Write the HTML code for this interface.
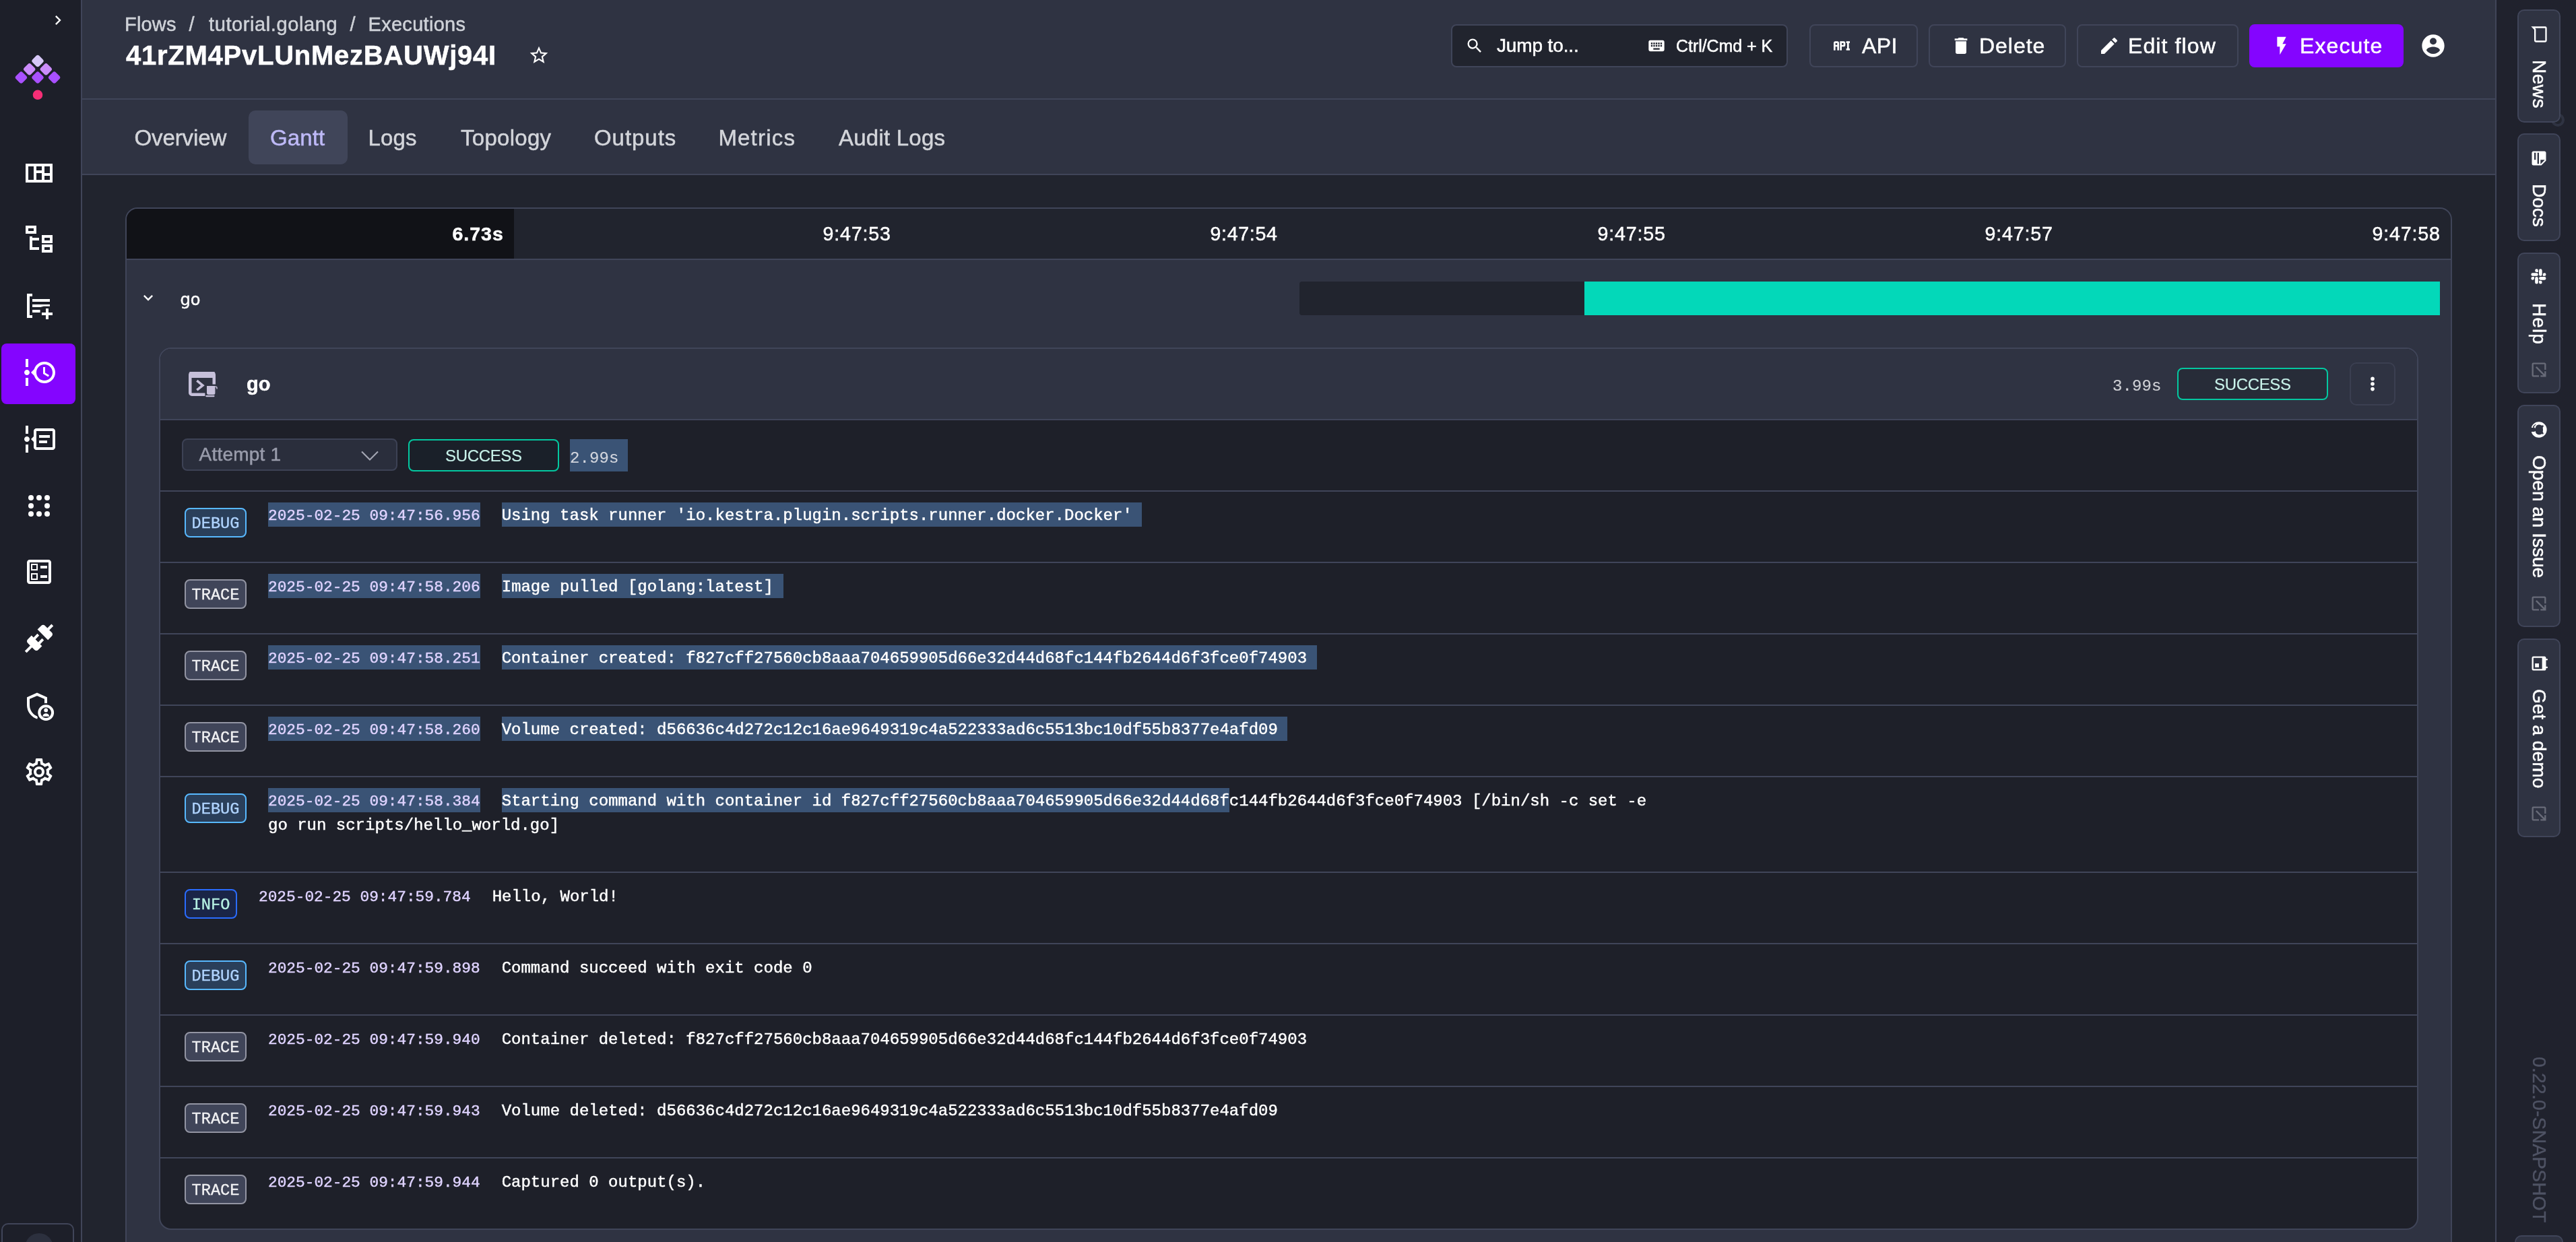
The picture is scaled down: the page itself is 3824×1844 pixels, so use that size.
<!DOCTYPE html>
<html lang="en">
<head>
<meta charset="utf-8">
<title>Executions - Gantt</title>
<style>
*{box-sizing:border-box;margin:0;padding:0}
html,body{width:3824px;height:1844px;overflow:hidden;background:#21242e}
body{position:relative;font-family:"Liberation Sans",sans-serif;color:#fff;-webkit-font-smoothing:antialiased}
#all{position:absolute;left:0;top:0;width:3824px;height:1844px;overflow:hidden;will-change:transform}
.abs{position:absolute}
svg{display:block}
.t{position:absolute;white-space:nowrap;line-height:1;-webkit-text-stroke:0.5px currentColor}
/* left sidebar */
#side{position:absolute;left:0;top:0;width:122px;height:1844px;background:#1d1f29;border-right:2px solid #404559}
#side .ic{position:absolute;left:34px;width:48px;height:48px;fill:#fff}
#side .act{position:absolute;left:2px;top:510px;width:110px;height:90px;border-radius:8px;background:#8405ff}
/* header */
#head{position:absolute;left:122px;top:0;width:3582px;height:148px;background:#2f3342;border-bottom:2px solid #404559}
#tabs{position:absolute;left:122px;top:148px;width:3582px;height:112px;background:#2f3342;border-bottom:2px solid #404559}
#rside{position:absolute;left:3704px;top:0;width:120px;height:1844px;background:#20222d;border-left:2px solid #404559}
.btn{position:absolute;top:36px;height:64px;border:2px solid #404559;border-radius:8px;background:#2f3342}
.tab{position:absolute;top:0;font-size:32px;color:#d2d4d9;line-height:1;white-space:nowrap}
/* gantt card */
#card{position:absolute;left:186px;top:308px;width:3454px;height:1600px;background:#2f3342;border:2px solid #404559;border-radius:18px;overflow:hidden}
#inner{position:absolute;left:236px;top:516px;width:3354px;height:1310px;background:#1e2029;border:2px solid #404559;border-radius:18px;overflow:hidden}
.row{position:absolute;left:0;width:3350px;border-top:2px solid #404559}
.bd{position:absolute;left:36px;top:24px;height:44px;border-radius:8px;border:2px solid;font-family:"Liberation Mono",monospace;font-size:23.6px;line-height:43px;text-align:center;-webkit-text-stroke:0.35px currentColor;overflow:hidden}
.bd.debug{width:92px;border-color:#58b9ff;background:#2a3f5a;color:#b0d4ff}
.bd.trace{width:92px;border-color:#9395a3;background:#404559;color:#f2f2f4}
.bd.info{width:78px;border-color:#2a6cff;background:#1a2547;color:#b6f1e3}
.lg{position:absolute;top:18px;-webkit-text-stroke:0.45px currentColor;font-family:"Liberation Mono",monospace;font-size:24px;line-height:36px;white-space:pre;color:#fff}
.lg .ts{font-size:22.8px;color:#dfd3ff;margin-right:32px}
.sel{position:absolute;background:#3a5375}
.rt{position:absolute;left:33px;width:64px;border:2px solid #404559;border-radius:10px;background:#2f3342}
.rt .lbl{position:absolute;left:0;width:60px;writing-mode:vertical-rl;font-size:28px;line-height:60px;color:#fff;white-space:nowrap;-webkit-text-stroke:0.5px currentColor}
.rt svg{position:absolute;fill:#fff}
</style>
</head>
<body>
<div id="all">
<div id="side">
  <svg class="abs" style="left:72px;top:16px;width:28px;height:28px;fill:#fff" viewBox="0 0 24 24"><path d="M8.59,16.58L13.17,12L8.59,7.41L10,6L16,12L10,18L8.59,16.58Z"/></svg>
  <!-- logo -->
  <svg class="abs" style="left:16px;top:74px;width:80px;height:80px" viewBox="0 0 80 80">
    <g transform="translate(40,16.5) rotate(45)"><rect x="-7" y="-7" width="14" height="14" rx="3.2" fill="#d6c7f7"/></g>
    <g transform="translate(27.7,28.8) rotate(45)"><rect x="-7" y="-7" width="14" height="14" rx="3.2" fill="#cb8cfb"/></g>
    <g transform="translate(52.3,28.8) rotate(45)"><rect x="-7" y="-7" width="14" height="14" rx="3.2" fill="#cb8cfb"/></g>
    <g transform="translate(15.4,41.1) rotate(45)"><rect x="-7" y="-7" width="14" height="14" rx="3.2" fill="#a950ff"/></g>
    <g transform="translate(40,41.1) rotate(45)"><rect x="-7" y="-7" width="14" height="14" rx="3.2" fill="#a950ff"/></g>
    <g transform="translate(64.6,41.1) rotate(45)"><rect x="-7" y="-7" width="14" height="14" rx="3.2" fill="#a950ff"/></g>
    <circle cx="40" cy="66.8" r="7.3" fill="#f62e76"/>
  </svg>
  <div class="act"></div>
  <svg class="ic" style="top:233px" viewBox="0 0 24 24"><path fill-rule="evenodd" d="M2,5V19H22V5H2M20,12H16V7H20V12M14,10H10V7H14V10M10,12H14V17H10V12M4,7H8V17H4V7M16,17V14H20V17H16Z"/></svg>
  <svg class="ic" style="top:331px" viewBox="0 0 24 24"><path fill-rule="evenodd" d="M12 13H7V18H12V20H5V10H7V11H12V13M8 4V6H4V4H8M10 2H2V8H10V2M20 11V13H16V11H20M22 9H14V15H22V9M20 18V20H16V18H20M22 16H14V22H22V16Z"/></svg>
  <svg class="ic" style="top:430px" viewBox="0 0 24 24"><path d="M3 3H7V5H5V19H7V21H3ZM7 7H20V9H7ZM7 11H20V12.4H15.5L13 13H7ZM7 15H12.8V17H7ZM17 14H19V17H22V19H19V22H17V19H14V17H17Z"/></svg>
  <svg class="ic" style="top:529px" viewBox="0 0 24 24"><path fill-rule="evenodd" d="M4 2V8H2V2H4M2 22H4V16H2V22M5 12C5 13.11 4.11 14 3 14C1.9 14 1 13.11 1 12C1 10.9 1.9 10 3 10C4.11 10 5 10.9 5 12M16 4C20.42 4 24 7.58 24 12C24 16.42 20.42 20 16 20C12.4 20 9.36 17.62 8.35 14.35L6 12L8.35 9.65C9.36 6.38 12.4 4 16 4M16 6C12.69 6 10 8.69 10 12C10 15.31 12.69 18 16 18C19.31 18 22 15.31 22 12C22 8.69 19.31 6 16 6M15 13V8H16.5V12.2L19.5 14L18.75 15.23L15 13Z"/></svg>
  <svg class="ic" style="top:628px" viewBox="0 0 24 24"><path fill-rule="evenodd" d="M5 12C5 13.11 4.11 14 3 14C1.9 14 1 13.11 1 12C1 10.9 1.9 10 3 10C4.11 10 5 10.9 5 12M4 2V8H2V2H4M2 22V16H4V22H2M24 6V18C24 19.11 23.11 20 22 20H10C8.9 20 8 19.11 8 18V14L6 12L8 10V6C8 4.89 8.9 4 10 4H22C23.11 4 24 4.89 24 6M10 6V18H22V6H10M12 9H20V11H12V9M12 13H18V15H12V13Z"/></svg>
  <svg class="ic" style="top:727px" viewBox="0 0 24 24"><circle cx="6" cy="6" r="2"/><circle cx="12" cy="6" r="2"/><circle cx="18" cy="6" r="2"/><circle cx="6" cy="12" r="2"/><circle cx="18" cy="12" r="2"/><circle cx="6" cy="18" r="2"/><circle cx="12" cy="18" r="2"/><circle cx="18" cy="18" r="2"/></svg>
  <svg class="ic" style="top:825px" viewBox="0 0 24 24"><path fill-rule="evenodd" d="M13 7.5H18V9.5H13V7.5M13 14.5H18V16.5H13V14.5M19 3C20.1 3 21 3.9 21 5V19C21 20.1 20.1 21 19 21H5C3.9 21 3 20.1 3 19V5C3 3.9 3.9 3 5 3H19M19 19V5H5V19H19M11 6V11H6V6H11M10 10V7H7V10H10M11 13V18H6V13H11M10 17V14H7V17H10Z"/></svg>
  <svg class="ic" style="top:924px" viewBox="0 0 24 24"><path d="M21.4 7.5C22.2 8.3 22.2 9.6 21.4 10.3L18.6 13.1L10.8 5.3L13.6 2.5C14.4 1.7 15.7 1.7 16.4 2.5L18.2 4.3L21.2 1.3L22.6 2.7L19.6 5.7L21.4 7.5M15.6 13.3L14.2 11.9L11.4 14.7L9.3 12.6L12.1 9.8L10.7 8.4L7.9 11.2L6.4 9.8L3.6 12.6C2.8 13.4 2.8 14.7 3.6 15.4L5.4 17.2L1.4 21.2L2.8 22.6L6.8 18.6L8.6 20.4C9.4 21.2 10.7 21.2 11.4 20.4L14.2 17.6L12.8 16.2L15.6 13.3Z"/></svg>
  <svg class="ic" style="top:1025px" viewBox="0 0 24 24"><path d="M17 10.6V5.75L10.5 2.9L4 5.75V11C4 15.3 6.9 19.1 10.9 20.3" fill="none" stroke="#fff" stroke-width="2"/><circle cx="17.1" cy="16.55" r="7.1" fill="#1d1f29"/><circle cx="17.1" cy="16.55" r="4.95" fill="none" stroke="#fff" stroke-width="2"/><circle cx="17.1" cy="14.7" r="1.45"/><path d="M14.7 19.1c0-1.3 1.5-2 2.4-2s2.4.7 2.4 2v.3h-4.8z"/></svg>
  <svg class="ic" style="top:1122px" viewBox="0 0 24 24"><path fill-rule="evenodd" d="M12,8A4,4 0 0,1 16,12A4,4 0 0,1 12,16A4,4 0 0,1 8,12A4,4 0 0,1 12,8M12,10A2,2 0 0,0 10,12A2,2 0 0,0 12,14A2,2 0 0,0 14,12A2,2 0 0,0 12,10M10,22C9.75,22 9.54,21.82 9.5,21.58L9.13,18.93C8.5,18.68 7.96,18.34 7.44,17.94L4.95,18.95C4.73,19.03 4.46,18.95 4.34,18.73L2.34,15.27C2.21,15.05 2.27,14.78 2.46,14.63L4.57,12.97L4.5,12L4.57,11L2.46,9.37C2.27,9.22 2.21,8.95 2.34,8.73L4.34,5.27C4.46,5.05 4.73,4.96 4.95,5.05L7.44,6.05C7.96,5.66 8.5,5.32 9.13,5.07L9.5,2.42C9.54,2.18 9.75,2 10,2H14C14.25,2 14.46,2.18 14.5,2.42L14.87,5.07C15.5,5.32 16.04,5.66 16.56,6.05L19.05,5.05C19.27,4.96 19.54,5.05 19.66,5.27L21.66,8.73C21.79,8.95 21.73,9.22 21.54,9.37L19.43,11L19.5,12L19.43,13L21.54,14.63C21.73,14.78 21.79,15.05 21.66,15.27L19.66,18.73C19.54,18.95 19.27,19.04 19.05,18.95L16.56,17.95C16.04,18.34 15.5,18.68 14.87,18.93L14.5,21.58C14.46,21.82 14.25,22 14,22H10M11.25,4L10.88,6.61C9.68,6.86 8.62,7.5 7.85,8.39L5.44,7.35L4.69,8.65L6.8,10.2C6.4,11.37 6.4,12.64 6.8,13.8L4.68,15.36L5.43,16.66L7.86,15.62C8.63,16.5 9.68,17.14 10.87,17.38L11.24,20H12.76L13.13,17.39C14.32,17.14 15.37,16.5 16.14,15.62L18.57,16.66L19.32,15.36L17.2,13.81C17.6,12.64 17.6,11.37 17.2,10.2L19.31,8.65L18.56,7.35L16.15,8.39C15.38,7.5 14.32,6.86 13.12,6.62L12.75,4H11.25Z"/></svg>
  <div class="abs" style="left:2px;top:1816px;width:108px;height:60px;border:2px solid #404559;border-radius:10px;background:#1d1f29"></div>
  <div class="abs" style="left:37px;top:1831px;width:42px;height:42px;border-radius:50%;background:#2c303e"></div>
</div>

<div id="head"></div>
<div class="t" style='left:185.00px;top:21.75px;font-size:29px;color:#cfd2d8;letter-spacing:0.193px;'>Flows</div>
<div class="t" style='left:280.50px;top:21.75px;font-size:29px;color:#cfd2d8;'>/</div>
<div class="t" style='left:310.00px;top:21.75px;font-size:29px;color:#cfd2d8;letter-spacing:0.603px;'>tutorial.golang</div>
<div class="t" style='left:519.50px;top:21.75px;font-size:29px;color:#cfd2d8;'>/</div>
<div class="t" style='left:546.50px;top:21.75px;font-size:29px;color:#cfd2d8;letter-spacing:0.294px;'>Executions</div>
<div class="t" style='left:187.00px;top:62.14px;font-size:40px;color:#fff;font-weight:700;letter-spacing:0.746px;'>41rZM4PvLUnMezBAUWj94I</div>
<svg class="abs" style="left:784px;top:65.8px;width:32px;height:32px;fill:#fff;" viewBox="0 0 24 24"><path fill-rule="evenodd" d="M12,15.39L8.24,17.66L9.23,13.38L5.91,10.5L10.29,10.13L12,6.09L13.71,10.13L18.09,10.5L14.77,13.38L15.76,17.66M22,9.24L14.81,8.63L12,2L9.19,8.63L2,9.24L7.45,13.97L5.82,21L12,17.27L18.18,21L16.54,13.97L22,9.24Z"/></svg>
<div class="btn" style="left:2154px;width:500px;background:#21242e"></div>
<svg class="abs" style="left:2175px;top:54px;width:28px;height:28px;fill:#fff;" viewBox="0 0 24 24"><path fill-rule="evenodd" d="M9.5,3A6.5,6.5 0 0,1 16,9.5C16,11.11 15.41,12.59 14.44,13.73L14.71,14H15.5L20.5,19L19,20.5L14,15.5V14.71L13.73,14.44C12.59,15.41 11.11,16 9.5,16A6.5,6.5 0 0,1 3,9.5A6.5,6.5 0 0,1 9.5,3M9.5,5C7,5 5,7 5,9.5C5,12 7,14 9.5,14C12,14 14,12 14,9.5C14,7 12,5 9.5,5Z"/></svg>
<div class="t" style='left:2222.00px;top:53.80px;font-size:28px;color:#fff;letter-spacing:-0.129px;'>Jump to...</div>
<svg class="abs" style="left:2445px;top:54px;width:28px;height:28px;fill:#fff;" viewBox="0 0 24 24"><path fill-rule="evenodd" d="M19,10H17V8H19M19,13H17V11H19M16,10H14V8H16M16,13H14V11H16M16,17H8V15H16M7,10H5V8H7M7,13H5V11H7M8,11H10V13H8M8,8H10V10H8M11,11H13V13H11M11,8H13V10H11M20,5H4C2.89,5 2,5.89 2,7V17A2,2 0 0,0 4,19H20A2,2 0 0,0 22,17V7C22,5.89 21.1,5 20,5Z"/></svg>
<div class="t" style='left:2488.00px;top:56.34px;font-size:25px;color:#fff;letter-spacing:-0.055px;'>Ctrl/Cmd + K</div>
<div class="btn" style="left:2686px;width:161px"></div>
<svg class="abs" style="left:2718px;top:52px;width:32px;height:32px;fill:#fff;" viewBox="0 0 24 24"><path fill-rule="evenodd" d="M7 7H5A2 2 0 0 0 3 9V17H5V13H7V17H9V9A2 2 0 0 0 7 7M7 11H5V9H7M14 7H10V17H12V13H14A2 2 0 0 0 16 11V9A2 2 0 0 0 14 7M14 11H12V9H14M20 9V15H21V17H17V15H18V9H17V7H21V9Z"/></svg>
<div class="t" style='left:2764.00px;top:52.41px;font-size:32px;color:#fff;letter-spacing:0.406px;'>API</div>
<div class="btn" style="left:2863px;width:204px"></div>
<svg class="abs" style="left:2894.5px;top:52.3px;width:32px;height:32px;fill:#fff;" viewBox="0 0 24 24"><path fill-rule="evenodd" d="M19,4H15.5L14.5,3H9.5L8.5,4H5V6H19M6,19A2,2 0 0,0 8,21H16A2,2 0 0,0 18,19V7H6V19Z"/></svg>
<div class="t" style='left:2938.00px;top:52.41px;font-size:32px;color:#fff;letter-spacing:0.959px;'>Delete</div>
<div class="btn" style="left:3083px;width:240px"></div>
<svg class="abs" style="left:3114.5px;top:52.3px;width:32px;height:32px;fill:#fff;" viewBox="0 0 24 24"><path fill-rule="evenodd" d="M20.71,7.04C21.1,6.65 21.1,6 20.71,5.63L18.37,3.29C18,2.9 17.35,2.9 16.96,3.29L15.12,5.12L18.87,8.87M3,17.25V21H6.75L17.81,9.93L14.06,6.18L3,17.25Z"/></svg>
<div class="t" style='left:3159.00px;top:52.41px;font-size:32px;color:#fff;letter-spacing:1.109px;'>Edit flow</div>
<div class="btn" style="left:3339px;width:229px;background:#8405ff;border-color:#8405ff"></div>
<svg class="abs" style="left:3371px;top:52px;width:32px;height:32px;fill:#fff;" viewBox="0 0 24 24"><path fill-rule="evenodd" d="M7,2V13H10V22L17,10H13L17,2H7Z"/></svg>
<div class="t" style='left:3414.00px;top:52.41px;font-size:32px;color:#fff;letter-spacing:1.095px;'>Execute</div>
<svg class="abs" style="left:3592px;top:47.5px;width:40px;height:40px;fill:#fff;" viewBox="0 0 24 24"><path fill-rule="evenodd" d="M12,19.2C9.5,19.2 7.29,17.92 6,16C6.03,14 10,12.9 12,12.9C14,12.9 17.97,14 18,16C16.71,17.92 14.5,19.2 12,19.2M12,5A3,3 0 0,1 15,8A3,3 0 0,1 12,11A3,3 0 0,1 9,8A3,3 0 0,1 12,5M12,2A10,10 0 0,0 2,12A10,10 0 0,0 12,22A10,10 0 0,0 22,12C22,6.47 17.5,2 12,2Z"/></svg>
<div id="tabs"></div>
<div class="abs" style="left:369px;top:164px;width:147px;height:80px;border-radius:10px;background:#404559"></div>
<div class="t" style='left:199.40px;top:187.87px;font-size:33px;color:#d3d5da;letter-spacing:-0.071px;'>Overview</div>
<div class="t" style='left:401.00px;top:187.87px;font-size:33px;color:#beb9f7;letter-spacing:0.114px;'>Gantt</div>
<div class="t" style='left:546.60px;top:187.87px;font-size:33px;color:#d3d5da;letter-spacing:0.114px;'>Logs</div>
<div class="t" style='left:684.00px;top:187.87px;font-size:33px;color:#d3d5da;letter-spacing:0.286px;'>Topology</div>
<div class="t" style='left:882.00px;top:187.87px;font-size:33px;color:#d3d5da;letter-spacing:0.956px;'>Outputs</div>
<div class="t" style='left:1066.40px;top:187.87px;font-size:33px;color:#d3d5da;letter-spacing:1.195px;'>Metrics</div>
<div class="t" style='left:1245.00px;top:187.87px;font-size:33px;color:#d3d5da;letter-spacing:0.228px;'>Audit Logs</div>
<div id="card"></div>
<div class="abs" style="left:188px;top:310px;width:3450px;height:74px;background:#21242e;border-radius:16px 16px 0 0"></div>
<div class="abs" style="left:188px;top:310px;width:575px;height:74px;background:#111217;border-radius:16px 0 0 0"></div>
<div class="abs" style="left:188px;top:384px;width:3450px;height:2px;background:#404559"></div>
<div class="t" style='left:671.40px;top:332.87px;font-size:28.5px;color:#fff;font-weight:700;letter-spacing:1.033px;'>6.73s</div>
<div class="t" style='left:1221.50px;top:332.79px;font-size:28.6px;color:#fff;letter-spacing:0.834px;'>9:47:53</div>
<div class="t" style='left:1796.50px;top:332.79px;font-size:28.6px;color:#fff;letter-spacing:0.667px;'>9:47:54</div>
<div class="t" style='left:2371.50px;top:332.79px;font-size:28.6px;color:#fff;letter-spacing:0.834px;'>9:47:55</div>
<div class="t" style='left:2946.50px;top:332.79px;font-size:28.6px;color:#fff;letter-spacing:0.834px;'>9:47:57</div>
<div class="t" style='left:3521.50px;top:332.79px;font-size:28.6px;color:#fff;letter-spacing:0.834px;'>9:47:58</div>
<svg class="abs" style="left:206px;top:428px;width:28px;height:28px;fill:#fff;" viewBox="0 0 24 24"><path fill-rule="evenodd" d="M7.41,8.58L12,13.17L16.59,8.58L18,10L12,16L6,10L7.41,8.58Z"/></svg>
<div class="t" style='left:267.50px;top:432.70px;font-size:24px;color:#fff;font-family:"DejaVu Sans", sans-serif;'>go</div>
<div class="abs" style="left:1929px;top:418px;width:1693px;height:50px;background:#21242e;border-radius:4px 0 0 4px"></div>
<div class="abs" style="left:2352px;top:418px;width:1270px;height:50px;background:#03d8b9"></div>
<div id="inner">
<div class="abs" style="left:0;top:0;width:3350px;height:104px;background:#2f3342"></div>
<div class="row" style="top:104px;height:106px"></div>
<div class="row" style="top:210px;height:106px"><div class="bd debug">DEBUG</div><div class="sel" style="left:160px;top:16px;width:315px;height:36px"></div><div class="sel" style="left:507px;top:16px;width:950.4px;height:36px"></div><div class="lg" style="left:160px"><span class="ts">2025-02-25 09:47:56.956</span>Using task runner 'io.kestra.plugin.scripts.runner.docker.Docker'</div></div>
<div class="row" style="top:316px;height:106px"><div class="bd trace">TRACE</div><div class="sel" style="left:160px;top:16px;width:315px;height:36px"></div><div class="sel" style="left:507px;top:16px;width:417.6px;height:36px"></div><div class="lg" style="left:160px"><span class="ts">2025-02-25 09:47:58.206</span>Image pulled [golang:latest]</div></div>
<div class="row" style="top:422px;height:106px"><div class="bd trace">TRACE</div><div class="sel" style="left:160px;top:16px;width:315px;height:36px"></div><div class="sel" style="left:507px;top:16px;width:1209.6px;height:36px"></div><div class="lg" style="left:160px"><span class="ts">2025-02-25 09:47:58.251</span>Container created: f827cff27560cb8aaa704659905d66e32d44d68fc144fb2644d6f3fce0f74903</div></div>
<div class="row" style="top:528px;height:106px"><div class="bd trace">TRACE</div><div class="sel" style="left:160px;top:16px;width:315px;height:36px"></div><div class="sel" style="left:507px;top:16px;width:1166.4px;height:36px"></div><div class="lg" style="left:160px"><span class="ts">2025-02-25 09:47:58.260</span>Volume created: d56636c4d272c12c16ae9649319c4a522333ad6c5513bc10df55b8377e4afd09</div></div>
<div class="row" style="top:634px;height:142px"><div class="bd debug">DEBUG</div><div class="sel" style="left:160px;top:16px;width:315px;height:36px"></div><div class="sel" style="left:507px;top:16px;width:1080.0px;height:36px"></div><div class="lg" style="left:160px"><span class="ts">2025-02-25 09:47:58.384</span>Starting command with container id f827cff27560cb8aaa704659905d66e32d44d68fc144fb2644d6f3fce0f74903 [/bin/sh -c set -e
go run scripts/hello_world.go]</div></div>
<div class="row" style="top:776px;height:106px"><div class="bd info">INFO</div><div class="lg" style="left:146px"><span class="ts">2025-02-25 09:47:59.784</span>Hello, World!</div></div>
<div class="row" style="top:882px;height:106px"><div class="bd debug">DEBUG</div><div class="lg" style="left:160px"><span class="ts">2025-02-25 09:47:59.898</span>Command succeed with exit code 0</div></div>
<div class="row" style="top:988px;height:106px"><div class="bd trace">TRACE</div><div class="lg" style="left:160px"><span class="ts">2025-02-25 09:47:59.940</span>Container deleted: f827cff27560cb8aaa704659905d66e32d44d68fc144fb2644d6f3fce0f74903</div></div>
<div class="row" style="top:1094px;height:106px"><div class="bd trace">TRACE</div><div class="lg" style="left:160px"><span class="ts">2025-02-25 09:47:59.943</span>Volume deleted: d56636c4d272c12c16ae9649319c4a522333ad6c5513bc10df55b8377e4afd09</div></div>
<div class="row" style="top:1200px;height:106px"><div class="bd trace">TRACE</div><div class="lg" style="left:160px"><span class="ts">2025-02-25 09:47:59.944</span>Captured 0 output(s).</div></div>
</div>
<svg class="abs" style="left:278px;top:549px;width:48px;height:44px" viewBox="0 0 48 44"><rect x="4.25" y="5.25" width="35.5" height="31.5" rx="2.5" fill="none" stroke="#c6c0da" stroke-width="4.5"/><rect x="2.6" y="3" width="38.8" height="9" rx="2" fill="#c6c0da"/><path d="M14.3 16.2l8.6 7-8.6 7" fill="none" stroke="#c6c0da" stroke-width="3.6"/><rect x="26.4" y="21.6" width="20" height="21" fill="#2f3342"/><path d="M29 24h12.4v10.5a2.5 2.5 0 0 1-2.5 2.5h-7.4a2.5 2.5 0 0 1-2.5-2.5z" fill="#c6c0da"/><path d="M41.4 25.2h1a1.6 1.6 0 0 1 1.6 1.6v1.6" fill="none" stroke="#c6c0da" stroke-width="1.5"/><rect x="27.2" y="38" width="13.4" height="2.2" rx="1.1" fill="#c6c0da"/></svg>
<div class="t" style='left:366.00px;top:556.45px;font-size:29px;color:#fff;font-weight:700;'>go</div>
<div class="t" style='left:3136.00px;top:562.10px;font-size:24px;color:#d0d1d6;font-family:"Liberation Mono", monospace;letter-spacing:0.098px;-webkit-text-stroke:0.15px currentColor;'>3.99s</div>
<div class="abs" style="left:3232px;top:546px;width:224px;height:48px;border:2px solid #03c8a0;border-radius:8px;background:#272c38"></div>
<div class="t" style='left:3287.00px;top:559.18px;font-size:24px;color:#c8f2ea;letter-spacing:-0.337px;-webkit-text-stroke:0.15px currentColor;'>SUCCESS</div>
<div class="abs" style="left:3488px;top:538px;width:68px;height:64px;border:2px solid #3b3f51;border-radius:10px"></div>
<svg class="abs" style="left:3506px;top:554px;width:32px;height:32px;fill:#fff" viewBox="0 0 24 24"><circle cx="12" cy="6.3" r="2.1"/><circle cx="12" cy="12" r="2.1"/><circle cx="12" cy="17.7" r="2.1"/></svg>
<div class="abs" style="left:270px;top:651px;width:320px;height:48px;border:2px solid #3d4255;border-radius:8px;background:#2a2e3c"></div>
<div class="t" style='left:295.50px;top:660.80px;font-size:28px;color:#999cab;letter-spacing:0.217px;'>Attempt 1</div>
<svg class="abs" style="left:534px;top:660.5px;width:30px;height:30px" viewBox="0 0 30 30"><path d="M3 9.5l12 12 12-12" fill="none" stroke="#a6a8b5" stroke-width="2.1"/></svg>
<div class="abs" style="left:606px;top:652px;width:224px;height:48px;border:2px solid #03c8a0;border-radius:8px;background:#1a2029"></div>
<div class="t" style='left:661.00px;top:665.18px;font-size:24px;color:#c8f2ea;letter-spacing:-0.337px;-webkit-text-stroke:0.15px currentColor;'>SUCCESS</div>
<div class="abs" style="left:846px;top:652px;width:86px;height:48px;background:#3a5375"></div>
<div class="t" style='left:846.00px;top:668.60px;font-size:24px;color:#d3d6de;font-family:"Liberation Mono", monospace;letter-spacing:0.098px;-webkit-text-stroke:0.15px currentColor;'>2.99s</div>
<div id="rside"></div>
<div class="abs" style="left:3787px;top:168px;width:20px;height:20px;border-radius:50%;border:4px solid #2f3342;background:#21242e"></div>
<div class="rt" style="left:3737px;top:14px;height:168px">
<svg style="left:16px;top:21px;width:28px;height:28px;transform:rotate(90deg)" viewBox="0 0 24 24"><path fill-rule="evenodd" d="M20,2H4A2,2 0 0,0 2,4V22L6,18H20A2,2 0 0,0 22,16V4A2,2 0 0,0 20,2M20,16H5.17L4,17.17V4H20V16Z"/></svg>
<div class="lbl" style="top:73px;letter-spacing:0.5px">News</div>
</div>
<div class="rt" style="left:3737px;top:198px;height:160px">
<svg style="left:16px;top:21px;width:28px;height:28px;transform:rotate(90deg)" viewBox="0 0 24 24"><path fill-rule="evenodd" d="M14,10H19.5L14,4.5V10M5,3H15L21,9V19A2,2 0 0,1 19,21H5C3.89,21 3,20.1 3,19V5C3,3.89 3.89,3 5,3M5,12V14H19V12H5M5,16V18H14V16H5Z"/></svg>
<div class="lbl" style="top:73px;letter-spacing:0px">Docs</div>
</div>
<div class="rt" style="left:3737px;top:375px;height:209px">
<svg style="left:16px;top:20.2px;width:28px;height:28px;transform:rotate(90deg)" viewBox="0 0 24 24"><path fill-rule="evenodd" d="M6,15A2,2 0 0,1 4,17A2,2 0 0,1 2,15A2,2 0 0,1 4,13H6V15M7,15A2,2 0 0,1 9,13A2,2 0 0,1 11,15V20A2,2 0 0,1 9,22A2,2 0 0,1 7,20V15M9,7A2,2 0 0,1 7,5A2,2 0 0,1 9,3A2,2 0 0,1 11,5V7H9M9,8A2,2 0 0,1 11,10A2,2 0 0,1 9,12H4A2,2 0 0,1 2,10A2,2 0 0,1 4,8H9M17,10A2,2 0 0,1 19,8A2,2 0 0,1 21,10A2,2 0 0,1 19,12H17V10M16,10A2,2 0 0,1 14,12A2,2 0 0,1 12,10V5A2,2 0 0,1 14,3A2,2 0 0,1 16,5V10M14,18A2,2 0 0,1 16,20A2,2 0 0,1 14,22A2,2 0 0,1 12,20V18H14M14,17A2,2 0 0,1 12,15A2,2 0 0,1 14,13H19A2,2 0 0,1 21,15A2,2 0 0,1 19,17H14Z"/></svg>
<div class="lbl" style="top:73px;letter-spacing:1.1px">Help</div>
<svg style="left:15.7px;top:158px;width:28px;height:28px;transform:rotate(90deg);fill:#686b78" viewBox="0 0 24 24"><path d="M14,3V5H17.59L7.76,14.83L9.17,16.24L19,6.41V10H21V3M19,19H5V5H12V3H5C3.89,3 3,3.9 3,5V19A2,2 0 0,0 5,21H19A2,2 0 0,0 21,19V12H19V19Z"/></svg>
</div>
<div class="rt" style="left:3737px;top:601px;height:330px">
<svg style="left:16px;top:21px;width:28px;height:28px;transform:rotate(90deg)" viewBox="0 0 24 24"><path fill-rule="evenodd" d="M12,2A10,10 0 0,0 2,12C2,16.42 4.87,20.17 8.84,21.5C9.34,21.58 9.5,21.27 9.5,21C9.5,20.77 9.5,20.14 9.5,19.31C6.73,19.91 6.14,17.97 6.14,17.97C5.68,16.81 5.03,16.5 5.03,16.5C4.12,15.88 5.1,15.9 5.1,15.9C6.1,15.97 6.63,16.93 6.63,16.93C7.5,18.45 8.97,18 9.54,17.76C9.63,17.11 9.89,16.67 10.17,16.42C7.95,16.17 5.62,15.31 5.62,11.5C5.62,10.39 6,9.5 6.65,8.79C6.55,8.54 6.2,7.5 6.75,6.15C6.75,6.15 7.59,5.88 9.5,7.17C10.29,6.95 11.15,6.84 12,6.84C12.85,6.84 13.71,6.95 14.5,7.17C16.41,5.88 17.25,6.15 17.25,6.15C17.8,7.5 17.45,8.54 17.35,8.79C18,9.5 18.38,10.39 18.38,11.5C18.38,15.32 16.04,16.16 13.81,16.41C14.17,16.72 14.5,17.33 14.5,18.26C14.5,19.6 14.5,20.68 14.5,21C14.5,21.27 14.66,21.59 15.17,21.5C19.14,20.16 22,16.42 22,12A10,10 0 0,0 12,2Z"/></svg>
<div class="lbl" style="top:73px;letter-spacing:0px">Open an Issue</div>
<svg style="left:15.7px;top:279px;width:28px;height:28px;transform:rotate(90deg);fill:#686b78" viewBox="0 0 24 24"><path d="M14,3V5H17.59L7.76,14.83L9.17,16.24L19,6.41V10H21V3M19,19H5V5H12V3H5C3.89,3 3,3.9 3,5V19A2,2 0 0,0 5,21H19A2,2 0 0,0 21,19V12H19V19Z"/></svg>
</div>
<div class="rt" style="left:3737px;top:948px;height:295px">
<svg style="left:16px;top:21px;width:28px;height:28px;transform:rotate(90deg)" viewBox="0 0 24 24"><path fill-rule="evenodd" d="M19,19H5V8H19M16,1V3H8V1H6V3H5C3.89,3 3,3.89 3,5V19A2,2 0 0,0 5,21H19A2,2 0 0,0 21,19V5C21,3.89 20.1,3 19,3H18V1M17,12H12V17H17V12Z"/></svg>
<div class="lbl" style="top:73px;letter-spacing:0.1px">Get a demo</div>
<svg style="left:15.7px;top:244px;width:28px;height:28px;transform:rotate(90deg);fill:#686b78" viewBox="0 0 24 24"><path d="M14,3V5H17.59L7.76,14.83L9.17,16.24L19,6.41V10H21V3M19,19H5V5H12V3H5C3.89,3 3,3.9 3,5V19A2,2 0 0,0 5,21H19A2,2 0 0,0 21,19V12H19V19Z"/></svg>
</div>
<div class="abs" style="left:3739px;top:1569px;width:60px;writing-mode:vertical-rl;font-size:28px;line-height:60px;color:#4f5364;white-space:nowrap;letter-spacing:0.35px;-webkit-text-stroke:0.4px #4f5364">0.22.0-SNAPSHOT</div>
<div class="abs" style="left:3733px;top:1834px;width:72px;height:40px;border:2px solid #404559;border-radius:10px;background:#2f3342"></div>
</div>
<script>(function(){var w=window.innerWidth||3824;if(w&&Math.abs(w-3824)>2){document.documentElement.style.zoom=w/3824;}})();</script>
</body>
</html>
